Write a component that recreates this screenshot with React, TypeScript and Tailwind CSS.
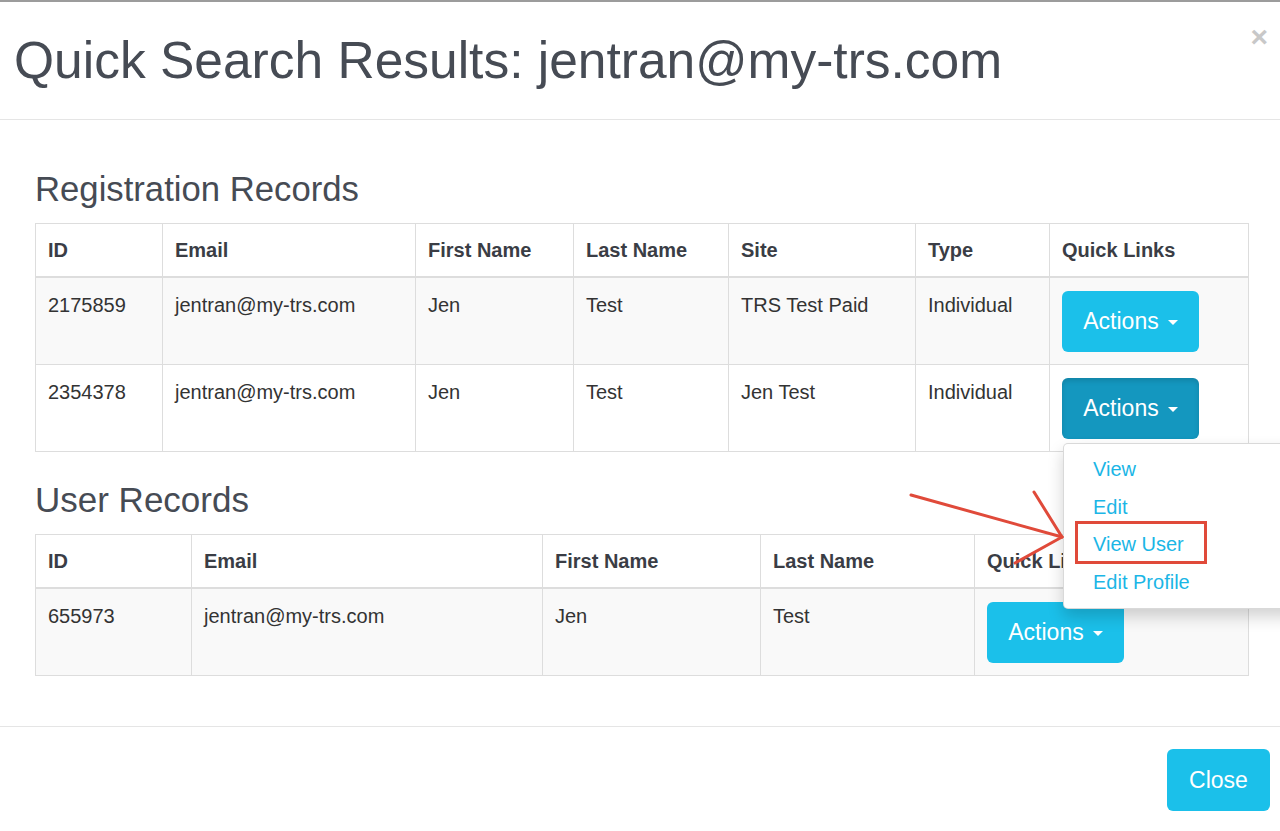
import React from "react";

type Col = { label: string; width: number };

const regCols: Col[] = [
  { label: "ID", width: 127 },
  { label: "Email", width: 253 },
  { label: "First Name", width: 158 },
  { label: "Last Name", width: 155 },
  { label: "Site", width: 187 },
  { label: "Type", width: 134 },
  { label: "Quick Links", width: 199 },
];

const userCols: Col[] = [
  { label: "ID", width: 156 },
  { label: "Email", width: 351 },
  { label: "First Name", width: 218 },
  { label: "Last Name", width: 214 },
  { label: "Quick Links", width: 274 },
];

const regRows = [
  ["2175859", "jentran@my-trs.com", "Jen", "Test", "TRS Test Paid", "Individual"],
  ["2354378", "jentran@my-trs.com", "Jen", "Test", "Jen Test", "Individual"],
];

const userRows = [["655973", "jentran@my-trs.com", "Jen", "Test"]];

function ActionsButton({ active = false }: { active?: boolean }) {
  return (
    <button
      type="button"
      className={`flex h-[61px] w-[137px] items-center justify-center gap-[9px] rounded-[6px] text-[23px] leading-none text-white ${
        active ? "bg-[#1497bf] shadow-[inset_0_3px_5px_rgba(0,0,0,0.125)]" : "bg-[#1bc0ea]"
      }`}
    >
      <span>Actions</span>
      <span className="mt-[2px] h-0 w-0 border-x-[5px] border-t-[5px] border-x-transparent border-t-white" />
    </button>
  );
}

function RecordsTable({
  cols,
  rows,
  activeRow = -1,
}: {
  cols: Col[];
  rows: string[][];
  activeRow?: number;
}) {
  return (
    <table className="table-fixed border-collapse text-[20px] text-[#333]">
      <colgroup>
        {cols.map((c) => (
          <col key={c.label} style={{ width: c.width }} />
        ))}
      </colgroup>
      <thead>
        <tr>
          {cols.map((c) => (
            <th
              key={c.label}
              className="border border-b-2 border-[#dddddd] px-[12px] pb-[12px] pt-[12px] text-left align-bottom font-bold leading-[28px] text-[#3a3d45]"
            >
              {c.label}
            </th>
          ))}
        </tr>
      </thead>
      <tbody>
        {rows.map((r, i) => (
          <tr key={i} className={i % 2 === 0 ? "bg-[#f9f9f9]" : "bg-white"}>
            {r.map((v, j) => (
              <td
                key={j}
                className="border border-[#dddddd] px-[12px] pb-[12px] pt-[13px] align-top leading-[28px]"
              >
                {v}
              </td>
            ))}
            <td className="border border-[#dddddd] px-[12px] pb-[12px] pt-[13px] align-top">
              <ActionsButton active={i === activeRow} />
            </td>
          </tr>
        ))}
      </tbody>
    </table>
  );
}

export default function App() {
  return (
    <div
      className="relative h-[831px] w-[1280px] overflow-hidden border-t-2 border-[#9c9c9c] bg-white"
      style={{ fontFamily: '"Liberation Sans", Arial, Helvetica, sans-serif' }}
    >
      {/* header */}
      <div className="flex h-[118px] items-center border-b border-[#e5e5e5] pl-[14px]">
        <h1 className="text-[51.5px] leading-none text-[#464b54]">
          Quick Search Results: jentran@my-trs.com
        </h1>
      </div>
      <button
        type="button"
        className="absolute right-[12px] top-[20px] text-[30px] font-bold leading-none text-[#c8c8c8]"
      >
        ×
      </button>

      {/* body */}
      <div className="pb-[50px] pl-[35px] pt-[49px]">
        <h2 className="mb-[14px] text-[34.7px] leading-[40px] text-[#464b54]">
          Registration Records
        </h2>
        <RecordsTable cols={regCols} rows={regRows} activeRow={1} />

        <h2 className="mb-[14px] mt-[28px] text-[35px] leading-[40px] text-[#464b54]">
          User Records
        </h2>
        <RecordsTable cols={userCols} rows={userRows} />
      </div>

      {/* footer */}
      <div className="flex justify-end border-t border-[#e5e5e5] pr-[10px] pt-[22px]">
        <button
          type="button"
          className="h-[62px] w-[103px] rounded-[6px] bg-[#1bc0ea] text-[23px] text-white"
        >
          Close
        </button>
      </div>

      {/* open dropdown */}
      <div className="absolute left-[1063px] top-[441px] w-[240px] rounded-[5px] border border-[rgba(0,0,0,0.15)] bg-white py-[7px] shadow-[0_8px_16px_rgba(0,0,0,0.175)]">
        {["View", "Edit", "View User", "Edit Profile"].map((t) => (
          <div key={t} className="h-[37.5px] pl-[29px] text-[20px] leading-[37.5px] text-[#1bb6e6]">
            {t}
          </div>
        ))}
      </div>

      {/* annotation */}
      <div className="absolute left-[1075px] top-[519px] h-[43px] w-[132px] border-[3px] border-[#e04a3a]" />
      <svg
        className="absolute left-[900px] top-[478px]"
        width="180"
        height="100"
        viewBox="0 0 180 100"
        fill="none"
        stroke="#e04a3a"
        strokeWidth="3"
        strokeLinecap="round"
      >
        <line x1="11" y1="15" x2="162" y2="57" />
        <line x1="134" y1="12" x2="162" y2="57" />
        <line x1="115" y1="83" x2="162" y2="57" />
      </svg>
    </div>
  );
}
